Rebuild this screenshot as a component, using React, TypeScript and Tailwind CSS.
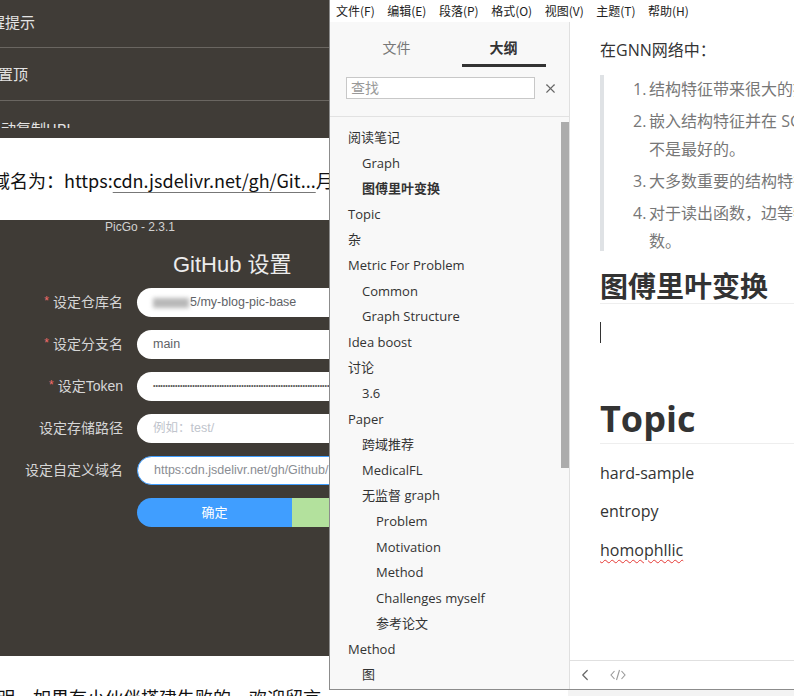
import React from "react";
import { X, ChevronLeft } from "lucide-react";

const outline: [string, number, boolean?][] = [
  ["阅读笔记", 0],
  ["Graph", 1],
  ["图傅里叶变换", 1, true],
  ["Topic", 0],
  ["杂", 0],
  ["Metric For Problem", 0],
  ["Common", 1],
  ["Graph Structure", 1],
  ["Idea boost", 0],
  ["讨论", 0],
  ["3.6", 1],
  ["Paper", 0],
  ["跨域推荐", 1],
  ["MedicalFL", 1],
  ["无监督 graph", 1],
  ["Problem", 2],
  ["Motivation", 2],
  ["Method", 2],
  ["Challenges myself", 2],
  ["参考论文", 2],
  ["Method", 0],
  ["图", 1],
  ["结构", 1],
];

const indent = ["pl-[18px]", "pl-[32px]", "pl-[46px]"];

function LeftPane() {
  return (
    <div className="w-[329px] h-[696px] shrink-0 flex flex-col overflow-hidden font-['Noto_Sans_CJK_SC',sans-serif]">
      <div className="h-[138px] shrink-0 bg-[#403c37] text-[#e4e4e4] text-[15px] leading-[20px] overflow-hidden">
        <div className="h-[48px] border-b border-[#6a6661] flex items-center pb-[3px] whitespace-nowrap">
          <span className="-ml-[10px]">醒提示</span>
        </div>
        <div className="h-[53px] border-b border-[#6a6661] flex items-center whitespace-nowrap">
          <span className="-ml-[2px]">置顶</span>
        </div>
        <div className="h-[27px] overflow-hidden whitespace-nowrap pt-[18px]">
          <span className="ml-[1px]">动复制URL</span>
        </div>
      </div>

      <div className="h-[82px] shrink-0 bg-white pt-[30px] text-[18px] leading-[24px] text-[#111] whitespace-nowrap">
        <span className="-ml-[8px]">域名为：https:</span>
        <span className="underline decoration-[#777] underline-offset-[4px]">cdn.jsdelivr.net/gh/Git...</span>
        <span>月</span>
      </div>

      <div className="h-[436px] shrink-0 bg-[#3f3b36] font-['Liberation_Sans','Noto_Sans_CJK_SC',sans-serif] whitespace-nowrap">
        <div className="pl-[105px] text-[12px] leading-[14px] text-[#d2d2d2]">PicGo - 2.3.1</div>
        <div className="mt-[17px] pl-[173px] text-[22px] leading-[28px] text-[#ececec]">GitHub 设置</div>
        <div className="mt-[9px] flex flex-col gap-[13px]">
          <Row label="设定仓库名" req>
            <span className="inline-block w-[36px] h-[10px] bg-[#b8b8b8] blur-[2px] mr-[1px]" />
            <span>5/my-blog-pic-base</span>
          </Row>
          <Row label="设定分支名" req>
            <span>main</span>
          </Row>
          <Row label="设定Token" req>
            <span className="text-[7px] text-[#555] tracking-[0px]">
              {"•".repeat(90)}
            </span>
          </Row>
          <Row label="设定存储路径">
            <span className="text-[#c0c4cc]">例如：test/</span>
          </Row>
          <Row label="设定自定义域名" blue>
            <span className="text-[#8a8d93]">https:cdn.jsdelivr.net/gh/Github/</span>
          </Row>
          <div className="h-[29px] flex pl-[137px]">
            <div className="w-[155px] shrink-0 rounded-l-full bg-[#409eff] text-white text-[13px] flex items-center justify-center">
              确定
            </div>
            <div className="w-[60px] shrink-0 bg-[#b3e19d]" />
          </div>
        </div>
      </div>

      <div className="flex-1 bg-white pt-[32px] text-[18px] leading-[18px] text-[#111] whitespace-nowrap">
        <span className="-ml-[3px]">明，如果有小伙伴搭建失败的，欢迎留言</span>
      </div>
    </div>
  );
}

function Row({
  label,
  req,
  blue,
  children,
}: {
  label: string;
  req?: boolean;
  blue?: boolean;
  children: React.ReactNode;
}) {
  return (
    <div className="h-[29px] flex items-center">
      <div className="w-[123px] shrink-0 text-right text-[14px] text-[#d6d6d6]">
        {req && <span className="text-[#f56c6c] text-[12px] align-top mr-[4px]">*</span>}
        {label}
      </div>
      <div
        className={
          "ml-[14px] w-[260px] h-[29px] shrink-0 rounded-full bg-white pl-[16px] text-[12.5px] text-[#606266] flex items-center overflow-hidden " +
          (blue ? "border border-[#409eff]" : "")
        }
      >
        {children}
      </div>
    </div>
  );
}

function MenuBar() {
  const items = ["文件(F)", "编辑(E)", "段落(P)", "格式(O)", "视图(V)", "主题(T)", "帮助(H)"];
  return (
    <div className="h-[22px] shrink-0 bg-white flex gap-[12.5px] pl-[6px] text-[12px] leading-[22px] text-[#222] font-['Noto_Sans_CJK_SC',sans-serif] whitespace-nowrap">
      {items.map((t) => (
        <span key={t}>{t}</span>
      ))}
    </div>
  );
}

function Sidebar() {
  return (
    <div className="w-[240px] shrink-0 border-r border-[#e0e0e0] bg-[#f8f8f8] flex flex-col font-['Open_Sans','Noto_Sans_CJK_SC',sans-serif]">
      <div className="pt-[17px] flex pl-[13px]">
        <div className="w-[107px] flex flex-col items-center">
          <span className="text-[14px] leading-[18px] text-[#777]">文件</span>
          <span className="mt-[7px] h-[3px] w-[84px]" />
        </div>
        <div className="w-[107px] flex flex-col items-center">
          <span className="text-[14px] leading-[18px] text-[#333] font-bold">大纲</span>
          <span className="mt-[7px] h-[3px] w-[84px] bg-[#333]" />
        </div>
      </div>
      <div className="mt-[10px] flex items-center pl-[16px]">
        <div className="w-[189px] h-[22px] border border-[#c8c8c8] bg-white text-[14px] leading-[20px] text-[#999] pl-[4px]">
          查找
        </div>
        <X size={15} strokeWidth={1.8} className="ml-[8px] text-[#666]" />
      </div>
      <div className="mt-[17px] h-px bg-[#e2e2e2]" />
      <div className="relative flex-1 overflow-hidden pt-[8px]">
        {outline.map(([t, lvl, active], i) => (
          <div
            key={i}
            className={
              "h-[25.6px] leading-[25.6px] text-[13px] whitespace-nowrap overflow-hidden " +
              indent[lvl] +
              (active ? " font-bold text-[#333]" : " text-[#333]")
            }
          >
            {t}
          </div>
        ))}
        <div className="absolute right-0 top-[5px] w-[8px] h-[346px] bg-[#acacac]" />
      </div>
    </div>
  );
}

function Content() {
  const quote: [string, string[]][] = [
    ["1.", ["结构特征带来很大的提升。"]],
    ["2.", ["嵌入结构特征并在 SGC 中训练的方式", "不是最好的。"]],
    ["3.", ["大多数重要的结构特征是度。"]],
    ["4.", ["对于读出函数，边等特征是更好的函", "数。"]],
  ];
  return (
    <div className="flex-1 min-w-0 flex flex-col bg-white font-['Open_Sans','Noto_Sans_CJK_SC',sans-serif]">
      <div className="flex-1 overflow-hidden pl-[30px] whitespace-nowrap">
        <p className="mt-[15px] text-[16px] leading-[26px] text-[#333]">在GNN网络中：</p>
        <div className="mt-[14px] h-[176px] border-l-4 border-[#dfe2e5]">
          <div className="-mt-[2px] pl-[29px] text-[16px] leading-[28px] text-[#777] flex flex-col gap-[4px]">
            {quote.map(([n, lines]) => (
              <div key={n} className="flex">
                <span className="w-[16px] shrink-0">{n}</span>
                <div className="flex flex-col">
                  {lines.map((l) => (
                    <span key={l}>{l}</span>
                  ))}
                </div>
              </div>
            ))}
          </div>
        </div>
        <h2 className="mt-[18px] text-[28px] font-bold leading-[34px] text-[#333] border-b border-[#eeeeee]">
          图傅里叶变换
        </h2>
        <div className="mt-[18px] w-px h-[21px] bg-[#333]" />
        <h1 className="mt-[56px] text-[36px] font-bold leading-[40px] pb-[4px] text-[#333] border-b border-[#eeeeee]">
          Topic
        </h1>
        <p className="mt-[17px] text-[16px] leading-[24px] text-[#333]">hard-sample</p>
        <p className="mt-[14px] text-[16px] leading-[24px] text-[#333]">entropy</p>
        <p className="mt-[15px] text-[16px] leading-[24px] text-[#333]">
          <span className="underline decoration-wavy decoration-[#e53935] decoration-1 underline-offset-[3px]">
            homophllic
          </span>
        </p>
      </div>
      <div className="h-[29px] shrink-0 border-t border-[#e0e0e0] flex items-center">
        <ChevronLeft size={18} strokeWidth={1.6} className="ml-[6px] text-[#666]" />
        <svg width="16" height="12" viewBox="0 0 16 12" className="ml-[16px]" fill="none" stroke="#999" strokeWidth="1.1">
          <polyline points="4.5,2 1,6 4.5,10" />
          <line x1="9.5" y1="1" x2="6.5" y2="11" />
          <polyline points="11.5,2 15,6 11.5,10" />
        </svg>
      </div>
    </div>
  );
}

function TyporaPane() {
  return (
    <div className="w-[465px] shrink-0 h-[696px] flex flex-col">
      <div className="h-[690px] shrink-0 flex flex-col border-l border-b border-[#8c8c8c] bg-white">
        <MenuBar />
        <div className="flex-1 flex min-h-0">
          <Sidebar />
          <Content />
        </div>
      </div>
      <div className="flex-1 flex">
        <div className="w-[239px] bg-white" />
        <div className="flex-1 bg-[#f3f3f3]" />
      </div>
    </div>
  );
}

export default function App() {
  return (
    <div className="w-[794px] h-[696px] overflow-hidden flex bg-white">
      <LeftPane />
      <TyporaPane />
    </div>
  );
}
